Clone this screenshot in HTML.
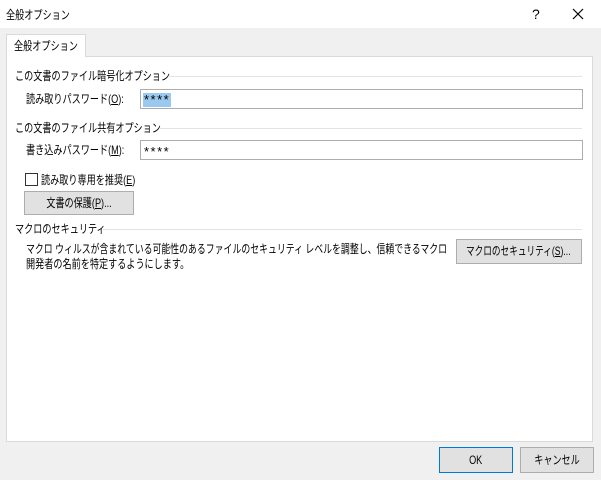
<!DOCTYPE html>
<html><head><meta charset="utf-8"><style>
*{box-sizing:border-box;margin:0;padding:0}
body{width:601px;height:480px;background:#f0f0f0;font-family:"Liberation Sans","Noto Sans CJK JP",sans-serif;font-size:12px;color:#000;position:relative;overflow:hidden}
.a{position:absolute;white-space:nowrap;line-height:14px;transform:scaleX(.76);transform-origin:left center}
.title{position:absolute;left:0;top:0;width:601px;height:28px;background:#fff}
.tab{position:absolute;left:6px;top:34px;width:80px;height:23px;background:#fff;border:1px solid #d9d9d9;border-bottom:none;z-index:2}
.panel{position:absolute;left:6px;top:56px;width:587px;height:386px;background:#fff;border:1px solid #d9d9d9}
.line{position:absolute;height:1px;background:#e3e3e3}
.inp{position:absolute;height:20px;border:1px solid #adadad;background:#fff}
.btn{position:absolute;background:#e1e1e1;border:1px solid #adadad;text-align:center;line-height:22px;white-space:nowrap}
.btn span{display:inline-block;transform:scaleX(.76);transform-origin:center}
.pw{position:absolute;font-size:13px;letter-spacing:1.5px;line-height:14px}
u{text-decoration:underline}
</style></head><body>
<div class="title"></div>
<div class="a" style="left:6px;top:8px">全般オプション</div>
<div class="a" style="left:532px;top:7px;font-size:14px;transform:none">?</div>
<svg style="position:absolute;left:572px;top:8px" width="12" height="12"><path d="M1 1L11 11M11 1L1 11" stroke="#000" stroke-width="1.2"/></svg>
<div class="panel"></div>
<div class="tab"></div>
<div class="a" style="left:14px;top:39px;z-index:3">全般オプション</div>

<div class="a" style="left:15px;top:69px">この文書のファイル暗号化オプション</div>
<div class="line" style="left:168px;top:76px;width:414px"></div>
<div class="a" style="left:26px;top:92px">読み取りパスワード(<u>O</u>):</div>
<div class="inp" style="left:140px;top:89px;width:443px"></div>
<div class="pw" style="left:143px;top:93px;background:#99c9ef;padding:0 1px">****</div>

<div class="a" style="left:15px;top:121px">この文書のファイル共有オプション</div>
<div class="line" style="left:160px;top:128px;width:422px"></div>
<div class="a" style="left:26px;top:143px">書き込みパスワード(<u>M</u>):</div>
<div class="inp" style="left:140px;top:140px;width:443px"></div>
<div class="pw" style="left:144px;top:145px">****</div>

<div style="position:absolute;left:25px;top:173px;width:13px;height:13px;border:1px solid #333;background:#fff"></div>
<div class="a" style="left:41px;top:173px">読み取り専用を推奨(<u>E</u>)</div>
<div class="btn" style="left:24px;top:191px;width:110px;height:24px"><span>文書の保護(<u>P</u>)...</span></div>

<div class="a" style="left:15px;top:222px">マクロのセキュリティ</div>
<div class="line" style="left:103px;top:229px;width:479px"></div>
<div class="a" style="left:26px;top:242px;transform:scaleX(.74)">マクロ ウィルスが含まれている可能性のあるファイルのセキュリティ レベルを調整し、信頼できるマクロ</div>
<div class="a" style="left:26px;top:257px">開発者の名前を特定するようにします。</div>
<div class="btn" style="left:456px;top:239px;width:126px;height:25px;text-align:left;padding-left:9px"><span style="transform-origin:left center;transform:scaleX(.72)">マクロのセキュリティ(<u>S</u>)...</span></div>

<div class="btn" style="left:439px;top:447px;width:74px;height:26px;border:1px solid #0078d7;line-height:24px"><span>OK</span></div>
<div class="btn" style="left:520px;top:447px;width:74px;height:26px;line-height:24px"><span>キャンセル</span></div>
</body></html>
